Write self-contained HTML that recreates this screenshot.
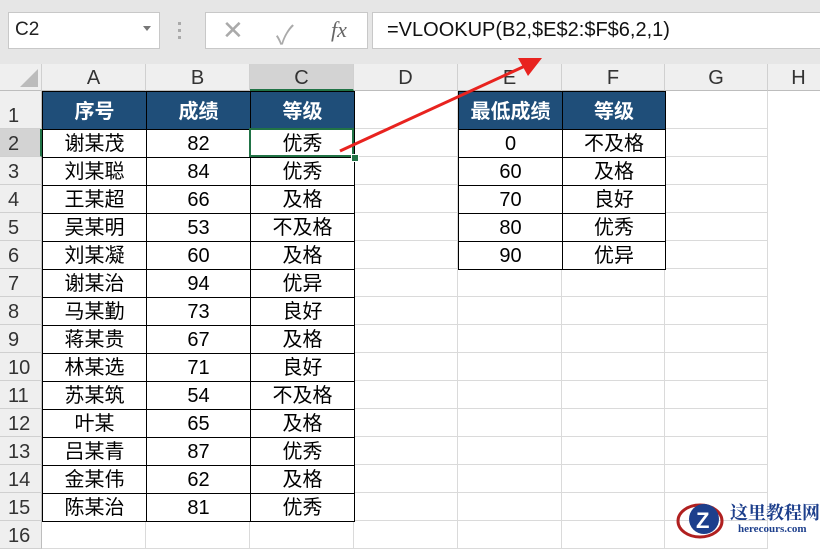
<!DOCTYPE html><html><head><meta charset="utf-8"><style>
body{margin:0;width:820px;height:541px;overflow:hidden;background:#fff;font-family:"Liberation Sans","Noto Sans CJK SC",sans-serif;position:relative}
.tb{position:absolute;left:0;top:0;width:820px;height:64px;background:#e6e6e6}
.box{position:absolute;background:#fff;border:1px solid #c8c8c8}
.c{position:absolute;box-sizing:border-box;text-align:center;font-size:20px;color:#000}
.ch{background:#efefef;color:#333;border-right:1px solid #d0d0d0;border-bottom:1px solid #bdbdbd}
.rh{background:#efefef;color:#333;border-bottom:1px solid #d0d0d0;border-right:1px solid #bdbdbd;text-align:left;padding-left:8px}
</style></head><body>
<div class="tb"></div>
<div class="box" style="left:8px;top:12px;width:150px;height:35px"><span style="position:absolute;left:6px;top:6px;font-size:19px;color:#222">C2</span><span style="position:absolute;right:8px;top:13px;border:4px solid transparent;border-top:5px solid #777"></span></div>
<div style="position:absolute;left:178px;top:22px;width:3px;height:3px;background:#aaa;box-shadow:0 7px #aaa,0 14px #aaa"></div>
<div class="box" style="left:205px;top:12px;width:161px;height:35px">
<span style="position:absolute;left:16px;top:2px;font-size:26px;color:#aaa">✕</span>
<span style="position:absolute;left:70px;top:2px;font-size:26px;color:#aaa">✓</span>
<span style="position:absolute;left:125px;top:4px;font-size:22px;font-style:italic;font-family:'Liberation Serif',serif;color:#666">fx</span></div>
<div class="box" style="left:372px;top:12px;width:450px;height:35px"><span style="position:absolute;left:14px;top:6px;font-size:20px;color:#111">=VLOOKUP(B2,$E$2:$F$6,2,1)</span></div>
<div id="g"></div>
<svg style="position:absolute;left:0;top:0" width="820" height="541"><line x1="340" y1="151" x2="525" y2="66" stroke="#e8231f" stroke-width="3"/><polygon points="542,58 518,58 528,76" fill="#e8231f"/></svg>
<svg style="position:absolute;left:670px;top:497px" width="60" height="44"><ellipse cx="30" cy="24" rx="22" ry="16" fill="none" stroke="#b02020" stroke-width="3"/><circle cx="34" cy="22" r="15" fill="#1d3f8c"/><text x="26" y="31" font-size="22" font-weight="bold" fill="#fff" font-family="Liberation Sans">Z</text></svg>
<div style="position:absolute;left:730px;top:499px;white-space:nowrap;font-size:18px;font-weight:bold;color:#1d3f8c;font-family:'Noto Serif CJK SC',serif">这里教程网</div>
<div style="position:absolute;left:738px;top:523px;white-space:nowrap;font-size:11px;font-weight:bold;color:#1d3f8c;font-family:'Liberation Serif',serif">herecours.com</div>
<script>
var cols=[0,42,146,250,354,458,562,665,768,830],L="ABCDEFGH";
var rows=[64,91,129];for(var i=3;i<=17;i++)rows.push(rows[rows.length-1]+28);
var h="";
h+='<div class="c ch" style="left:0;top:64px;width:42px;height:27px"><div style="position:absolute;right:3px;bottom:3px;border-left:18px solid transparent;border-bottom:18px solid #bbb"></div></div>';
for(var j=0;j<8;j++)h+='<div class="c ch" style="left:'+cols[j+1]+'px;top:64px;width:'+(cols[j+2]-cols[j+1])+'px;height:27px;line-height:29px;'+(j==2?'background:#d3d3d3;border-bottom:2px solid #217346':'')+'">'+L[j]+'</div>';
for(var r=1;r<=16;r++){var t=rows[r],hh=rows[r+1]-t;
h+='<div class="c rh" style="left:0;top:'+t+'px;width:42px;height:'+hh+'px;line-height:'+(r==1?50:31)+'px;'+(r==2?'background:#d3d3d3;border-right:2px solid #217346':'')+'">'+r+'</div>';
for(var j=1;j<8;j++)h+='<div style="position:absolute;left:'+cols[j]+'px;top:'+t+'px;width:'+(cols[j+1]-cols[j])+'px;height:'+hh+'px;box-sizing:border-box;border-right:1px solid #dadada;border-bottom:1px solid #dadada"></div>';}
var d=[["谢某茂",82,"优秀"],["刘某聪",84,"优秀"],["王某超",66,"及格"],["吴某明",53,"不及格"],["刘某凝",60,"及格"],["谢某治",94,"优异"],["马某勤",73,"良好"],["蒋某贵",67,"及格"],["林某选",71,"良好"],["苏某筑",54,"不及格"],["叶某",65,"及格"],["吕某青",87,"优秀"],["金某伟",62,"及格"],["陈某治",81,"优秀"]];
function cell(x,y,w,hh,txt,hd){return '<div class="c" style="left:'+x+'px;top:'+y+'px;width:'+(w+1)+'px;height:'+(hh+1)+'px;border:1px solid #000;line-height:'+(hd?38:29)+'px;'+(hd?'background:#1f4e79;color:#fff;font-weight:bold;padding-top:1px':'background:#fff')+'">'+txt+'</div>';}
var hd=["序号","成绩","等级"];
for(var j=0;j<3;j++)h+=cell(cols[j+1],91,104,38,hd[j],1);
for(var r=0;r<14;r++)for(var j=0;j<3;j++)h+=cell(cols[j+1],rows[r+2],104,28,d[r][j]);
h+=cell(458,91,104,38,"最低成绩",1);h+=cell(562,91,103,38,"等级",1);
var e=[[0,"不及格"],[60,"及格"],[70,"良好"],[80,"优秀"],[90,"优异"]];
for(var r=0;r<5;r++){h+=cell(458,rows[r+2],104,28,e[r][0]);h+=cell(562,rows[r+2],103,28,e[r][1]);}
h+='<div style="position:absolute;left:249px;top:128px;width:105px;height:29px;box-sizing:border-box;border:2px solid #217346"></div><div style="position:absolute;left:351px;top:154px;width:6px;height:6px;background:#217346;border:1px solid #fff"></div>';
document.getElementById("g").innerHTML=h;
</script></body></html>
